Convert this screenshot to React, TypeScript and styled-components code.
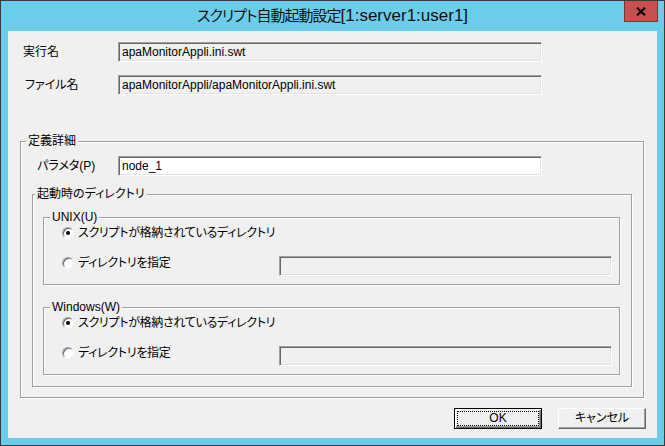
import React from 'react';
import styled, { createGlobalStyle } from 'styled-components';

const GlobalStyle = createGlobalStyle`
  html, body {
    margin: 0;
    padding: 0;
    background: #6ccdeb;
  }
  body {
    font-family: "Liberation Sans", "Noto Sans CJK JP", sans-serif;
    font-size: 12px;
    color: #000;
    font-feature-settings: "palt";
  }
  * {
    box-sizing: border-box;
  }
`;

const Window = styled.div`
  width: 665px;
  height: 446px;
  border: 1px solid #3b3b3b;
  background: #6ccdeb;
  display: flex;
  flex-direction: column;
`;

const TitleBar = styled.div`
  height: 30px;
  display: grid;
  grid-template-columns: 1fr auto 1fr;
  align-items: start;
`;

const Title = styled.div`
  grid-column: 2;
  margin-top: 5px;
  font-size: 17px;
  line-height: 20px;
  color: #111;
  white-space: nowrap;
`;

const TitleJa = styled.span`
  font-size: 15px;
  letter-spacing: -1px;
`;

const CloseButton = styled.div`
  grid-column: 3;
  justify-self: end;
  margin-right: 6px;
  width: 34px;
  height: 21px;
  background: #c75050;
  border: 1px solid #7d3333;
  border-top: none;
  display: flex;
  align-items: center;
  justify-content: center;
`;

const Client = styled.div`
  margin: 0 7px;
  height: 407px;
  background: #f0f0f0;
  padding-top: 11px;
  display: flex;
  flex-direction: column;
`;

const InfoRow = styled.div<{ $gap?: number }>`
  display: flex;
  align-items: center;
  margin-top: ${(p) => p.$gap ?? 0}px;
`;

const RowLabel = styled.div<{ $width: number; $indent: number }>`
  width: ${(p) => p.$width}px;
  padding-left: ${(p) => p.$indent}px;
  line-height: 14px;
  white-space: nowrap;
`;

const TextField = styled.div<{ $width: number; $white?: boolean }>`
  width: ${(p) => p.$width}px;
  height: 20px;
  padding: 2px 3px 0;
  line-height: 14px;
  background: ${(p) => (p.$white ? '#fff' : '#f0f0f0')};
  border-top: 1px solid #a0a0a0;
  border-left: 1px solid #a0a0a0;
  border-right: 1px solid #fff;
  border-bottom: 1px solid #fff;
  box-shadow: inset 1px 1px 0 #696969, inset -1px -1px 0 #e3e3e3;
  white-space: nowrap;
  overflow: hidden;
`;

const Group = styled.fieldset<{ $width?: number; $gap?: number }>`
  margin: ${(p) => p.$gap ?? 0}px 0 0 0;
  padding: 0;
  min-width: 0;
  width: ${(p) => (p.$width ? `${p.$width}px` : 'auto')};
  border: 1px solid #a0a0a0;
  box-shadow: 1px 1px 0 #fff, inset 1px 1px 0 #fff;
`;

const OuterGroup = styled(Group)`
  margin-left: 12px;
`;

const Legend = styled.legend<{ $offset: number }>`
  margin-left: ${(p) => p.$offset}px;
  padding: 0 2px;
  line-height: 12px;
  background: #f0f0f0;
  white-space: nowrap;
`;

const GroupBody = styled.div<{ $pad: string }>`
  padding: ${(p) => p.$pad};
  display: flex;
  flex-direction: column;
`;

const OptionRow = styled.div<{ $gap?: number }>`
  display: flex;
  align-items: ${(p) => (p.$gap ? 'flex-start' : 'center')};
  justify-content: space-between;
  height: 20px;
  margin-top: ${(p) => p.$gap ?? 0}px;
`;

const Radio = styled.label`
  display: flex;
  align-items: center;
  line-height: 14px;
  letter-spacing: -0.3px;
  white-space: nowrap;
`;

const RadioDot = styled.span<{ $checked?: boolean }>`
  width: 12px;
  height: 12px;
  margin-right: 4px;
  border-radius: 50%;
  background: #fff;
  border: 1px solid;
  border-color: #a0a0a0 #f4f4f4 #f4f4f4 #a0a0a0;
  box-shadow: inset 1px 1px 0 #696969;
  display: flex;
  align-items: center;
  justify-content: center;

  &::after {
    content: '';
    width: 4px;
    height: 4px;
    border-radius: 50%;
    background: ${(p) => (p.$checked ? '#000' : 'transparent')};
  }
`;

const ButtonRow = styled.div`
  display: flex;
  justify-content: flex-end;
  gap: 16px;
  margin-top: 10px;
  padding-right: 11px;
`;

const Button = styled.div<{ $default?: boolean }>`
  width: 88px;
  height: 21px;
  padding: ${(p) => (p.$default ? '2px' : '3px')};
  background: #f0f0f0;
  border: 1px solid;
  border-color: ${(p) => (p.$default ? '#000' : '#fff #696969 #696969 #fff')};
  box-shadow: ${(p) =>
    p.$default
      ? 'inset 1px 1px 0 #fff, inset -1px -1px 0 #696969, inset -2px -2px 0 #a0a0a0'
      : 'inset -1px -1px 0 #a0a0a0'};
  display: flex;
`;

const ButtonFace = styled.span<{ $focus?: boolean }>`
  flex: 1;
  display: flex;
  align-items: center;
  justify-content: center;
  line-height: 13px;
  border: 1px dotted ${(p) => (p.$focus ? '#000' : 'transparent')};
`;

const DirectoryGroup: React.FC<{ title: string; gap?: number }> = ({ title, gap }) => (
  <Group $gap={gap}>
    <Legend $offset={6}>{title}</Legend>
    <GroupBody $pad="0 7px 8px 18px">
      <OptionRow>
        <Radio>
          <RadioDot $checked />
          スクリプトが格納されているディレクトリ
        </Radio>
      </OptionRow>
      <OptionRow $gap={13}>
        <Radio>
          <RadioDot />
          ディレクトリを指定
        </Radio>
        <TextField $width={333} />
      </OptionRow>
    </GroupBody>
  </Group>
);

const App: React.FC = () => {
  return (
    <>
      <GlobalStyle />
      <Window>
        <TitleBar>
          <Title>
            <TitleJa>スクリプト自動起動設定</TitleJa>[1:server1:user1]
          </Title>
          <CloseButton>
            <svg width="10" height="9" viewBox="0 0 10 9">
              <path d="M1 0.8 L9 8.2 M9 0.8 L1 8.2" stroke="#000" strokeWidth="2.2" />
            </svg>
          </CloseButton>
        </TitleBar>
        <Client>
          <InfoRow>
            <RowLabel $width={110} $indent={15}>実行名</RowLabel>
            <TextField $width={424}>apaMonitorAppli.ini.swt</TextField>
          </InfoRow>
          <InfoRow $gap={13}>
            <RowLabel $width={110} $indent={17}>ファイル名</RowLabel>
            <TextField $width={424}>apaMonitorAppli/apaMonitorAppli.ini.swt</TextField>
          </InfoRow>

          <OuterGroup $width={624} $gap={40}>
            <Legend $offset={5}>定義詳細</Legend>
            <GroupBody $pad="0 11px 10px 11px">
              <InfoRow $gap={9}>
                <RowLabel $width={86} $indent={5}>パラメタ(P)</RowLabel>
                <TextField $width={424} $white>node_1</TextField>
              </InfoRow>
              <Group $gap={12}>
                <Legend $offset={2}>起動時のディレクトリ</Legend>
                <GroupBody $pad="0 11px 11px 10px">
                  <DirectoryGroup title="UNIX(U)" gap={11} />
                  <DirectoryGroup title="Windows(W)" gap={16} />
                </GroupBody>
              </Group>
            </GroupBody>
          </OuterGroup>

          <ButtonRow>
            <Button $default>
              <ButtonFace $focus>OK</ButtonFace>
            </Button>
            <Button>
              <ButtonFace>キャンセル</ButtonFace>
            </Button>
          </ButtonRow>
        </Client>
      </Window>
    </>
  );
};

export default App;
